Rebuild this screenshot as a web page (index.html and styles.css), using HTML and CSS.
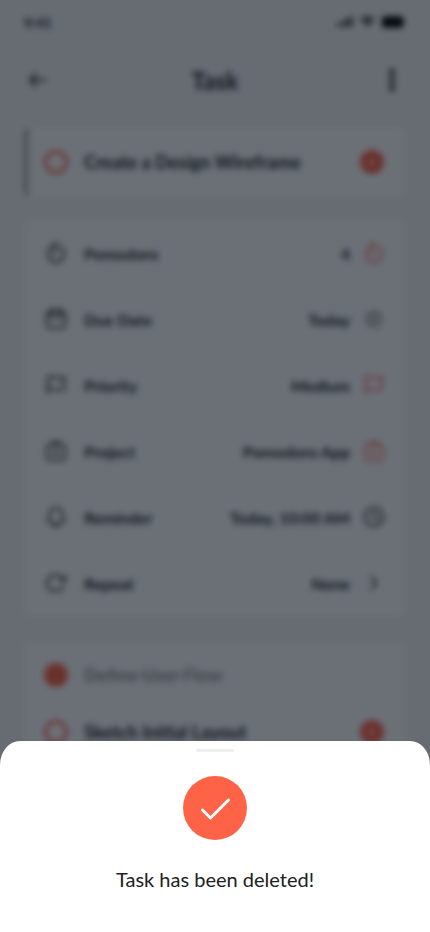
FILE: index.html
```html
<!DOCTYPE html>
<html lang="en">
<head>
<meta charset="utf-8">
<meta name="viewport" content="width=device-width, initial-scale=1">
<title>Task</title>
<link rel="stylesheet" href="styles.css">
</head>
<body>
<svg class="defs" aria-hidden="true">
  <symbol id="timer" viewBox="0 0 24 24"><path d="M12 1v5M12 1C8 5 3 7 3 13a9 9 0 0 0 18 0c0-4-2-7-5-8M12 13l-3-4"/></symbol>
  <symbol id="calendar" viewBox="0 0 24 24"><rect x="2" y="3" width="20" height="19" rx="4"/><path d="M2 8h20M8 1v4M16 1v4M8 13h.01M12 13h.01M16 13h.01"/></symbol>
  <symbol id="flag" viewBox="0 0 24 24"><path d="M3 21V4c3-2 6-1 9 0s6 1 9-1v13c-3 2-6 2-9 1s-6-1-9 0"/></symbol>
  <symbol id="project" viewBox="0 0 24 24"><rect x="2" y="5" width="20" height="17" rx="4"/><path d="M7 5l2-3h6l2 3M8 12l4 3 4-3"/></symbol>
  <symbol id="bell" viewBox="0 0 24 24"><path d="M12 2a7 7 0 0 0-7 7c0 4-2 5-2 7 0 2 3 3 9 3s9-1 9-3c0-2-2-3-2-7a7 7 0 0 0-7-7zM9 22h6"/></symbol>
  <symbol id="repeat" viewBox="0 0 24 24"><path d="M20 15a9 9 0 1 1-2-9l3 3M22 4v5h-5"/></symbol>
  <symbol id="sun" viewBox="0 0 24 24"><circle cx="12" cy="12" r="6"/><path d="M12 2v1M12 21v1M2 12h1M21 12h1M5 5l1 1M18 18l1 1M5 19l1-1M18 6l1-1M12 10v4"/></symbol>
  <symbol id="clock" viewBox="0 0 24 24"><circle cx="12" cy="12" r="10"/><path d="M12 6v6l4 3"/></symbol>
  <symbol id="chevron" viewBox="0 0 24 24"><path d="M9 5l6 7-6 7"/></symbol>
  <symbol id="play" viewBox="0 0 24 24"><circle class="disc" cx="12" cy="12" r="12"/><path class="mark" d="M10 9l5 3-5 3z"/></symbol>
</svg>

<main class="screen">
  <div class="status">
    <span>9:41</span>
    <span class="status-icons">
      <svg width="17" height="11" viewBox="0 0 20 12" aria-hidden="true"><path d="M0 8h3v4H0zM5 6h3v6H5zM10 3h3v9h-3zM15 0h3v12h-3z"/></svg>
      <svg width="15" height="11" viewBox="0 0 18 12" aria-hidden="true"><path d="M0 3q9-6 18 0l-2 2q-7-5-14 0zM3 6q6-4 12 0l-2 2q-4-3-8 0zM6 9q3-2 6 0l-3 3z"/></svg>
      <svg width="25" height="12" viewBox="0 0 26 12" aria-hidden="true"><rect x="1" width="22" height="12" rx="3"/><rect x="24" y="4" width="1" height="4"/></svg>
    </span>
  </div>
  <header class="bar">
    <button class="icon-button" aria-label="Back"><svg class="icon" viewBox="0 0 24 24" aria-hidden="true"><path d="M20 12H4M10 6l-6 6 6 6"/></svg></button>
    <h1>Task</h1>
    <button class="icon-button" aria-label="More"><svg class="icon dots" viewBox="0 0 24 24" aria-hidden="true"><circle cx="12" cy="4" r="3"/><circle cx="12" cy="12" r="3"/><circle cx="12" cy="20" r="3"/></svg></button>
  </header>

  <section class="card task">
    <input class="check" type="checkbox" id="main-task">
    <label for="main-task">Create a Design Wireframe</label>
    <button class="icon-button" aria-label="Start task"><svg class="icon play" aria-hidden="true"><use href="#play"/></svg></button>
  </section>

  <section class="card details">
    <div class="row"><svg class="icon" aria-hidden="true"><use href="#timer"/></svg><span class="name">Pomodoro</span><span>4</span><svg class="icon accent" aria-hidden="true"><use href="#timer"/></svg></div>
    <div class="row"><svg class="icon" aria-hidden="true"><use href="#calendar"/></svg><span class="name">Due Date</span><span>Today</span><svg class="icon muted" aria-hidden="true"><use href="#sun"/></svg></div>
    <div class="row"><svg class="icon" aria-hidden="true"><use href="#flag"/></svg><span class="name">Priority</span><span>Medium</span><svg class="icon accent" aria-hidden="true"><use href="#flag"/></svg></div>
    <div class="row"><svg class="icon" aria-hidden="true"><use href="#project"/></svg><span class="name">Project</span><span>Pomodoro App</span><svg class="icon accent" aria-hidden="true"><use href="#project"/></svg></div>
    <div class="row"><svg class="icon" aria-hidden="true"><use href="#bell"/></svg><span class="name">Reminder</span><span>Today, 10:00 AM</span><svg class="icon" aria-hidden="true"><use href="#clock"/></svg></div>
    <div class="row"><svg class="icon" aria-hidden="true"><use href="#repeat"/></svg><span class="name">Repeat</span><span>None</span><svg class="icon" aria-hidden="true"><use href="#chevron"/></svg></div>
  </section>

  <section class="card subtasks">
    <div class="subtask done">
      <input class="check" type="checkbox" id="flow" checked>
      <label for="flow">Define User Flow</label>
    </div>
    <div class="subtask">
      <input class="check" type="checkbox" id="layout">
      <label for="layout">Sketch Initial Layout</label>
      <button class="icon-button" aria-label="Start subtask"><svg class="icon play" aria-hidden="true"><use href="#play"/></svg></button>
    </div>
  </section>
</main>

<div class="scrim"></div>
<section class="sheet" role="dialog" aria-labelledby="message">
  <div class="handle"></div>
  <svg class="success" viewBox="0 0 64 64" aria-hidden="true"><circle cx="32" cy="32" r="32"/><path d="M19.500 34l8 8L45.500 24"/></svg>
  <p id="message">Task has been deleted!</p>
</section>
</body>
</html>
```
FILE: styles.css
```css
* {
  box-sizing: border-box;
}

body {
  margin: 0;
  height: 100vh;
  overflow: hidden;
  background: #f5f5f5;
  color: #212121;
  font-family: Lato, "Open Sans", sans-serif;
}

.defs {
  position: absolute;
  width: 0;
  height: 0;
}

.screen {
  display: flex;
  flex-direction: column;
  padding: 0 24px;
}

.status {
  display: flex;
  align-items: center;
  justify-content: space-between;
  height: 44px;
  font-size: 14px;
  font-weight: 700;
}

.status-icons {
  display: flex;
  gap: 6px;
}

.bar {
  display: flex;
  align-items: center;
  justify-content: space-between;
  height: 72px;
  padding: 0 2px;
}

h1 {
  margin: 0;
  font-size: 24px;
  font-weight: 700;
}

.icon-button {
  display: flex;
  padding: 0;
  border: 0;
  background: none;
  color: inherit;
}

.icon {
  flex: none;
  width: 24px;
  height: 24px;
  fill: none;
  stroke: currentColor;
  stroke-width: 2;
  stroke-linecap: round;
  stroke-linejoin: round;
}

.row .icon {
  padding: 1px;
}

.dots {
  fill: currentColor;
  stroke: none;
}

.accent {
  color: #ff6347;
}

.muted {
  color: #757575;
}

.disc {
  fill: #ff6347;
  stroke: none;
}

.mark {
  fill: #fff;
  stroke: none;
}

.card {
  border-radius: 6px;
  background: #fff;
}

.task {
  display: flex;
  align-items: center;
  gap: 16px;
  height: 68px;
  margin-top: 12px;
  padding: 0 22px 0 16px;
  border-left: 4px solid #9e9e9e;
}

.task label,
.subtask label {
  flex: 1;
  font-size: 18px;
  font-weight: 700;
}

.check {
  appearance: none;
  width: 24px;
  height: 24px;
  margin: 0;
  border: 3px solid #ff6347;
  border-radius: 50%;
}

.check:checked {
  background: #ff6347;
}

.details {
  margin-top: 24px;
}

.row {
  display: flex;
  align-items: center;
  gap: 12px;
  height: 66px;
  padding: 0 20px;
  font-size: 16px;
  font-weight: 700;
}

.name {
  flex: 1;
  padding-left: 4px;
}

.subtasks {
  margin-top: 26px;
  padding: 4px 22px 0 20px;
}

.subtask {
  display: flex;
  align-items: center;
  gap: 16px;
  height: 57px;
}

.subtask.done label {
  color: #9e9e9e;
  text-decoration: line-through;
}

.scrim {
  position: fixed;
  inset: 0;
  background: rgba(9, 16, 29, 0.6);
  backdrop-filter: blur(3px);
}

.sheet {
  position: fixed;
  right: 0;
  bottom: 0;
  left: 0;
  display: flex;
  flex-direction: column;
  align-items: center;
  padding: 8px 24px 36px;
  border-radius: 20px 20px 0 0 / 24px 24px 0 0;
  background: #fff;
}

.handle {
  width: 38px;
  height: 3px;
  border-radius: 2px;
  background: #eee;
}

.success {
  width: 64px;
  height: 64px;
  margin-top: 24px;
  fill: #ff6347;
}

.success path {
  fill: none;
  stroke: #fff;
  stroke-width: 3;
  stroke-linecap: round;
  stroke-linejoin: round;
}

.sheet p {
  margin: 24px 0 0;
  font-size: 20px;
  line-height: 30px;
  padding-bottom: 2px;
}
```
